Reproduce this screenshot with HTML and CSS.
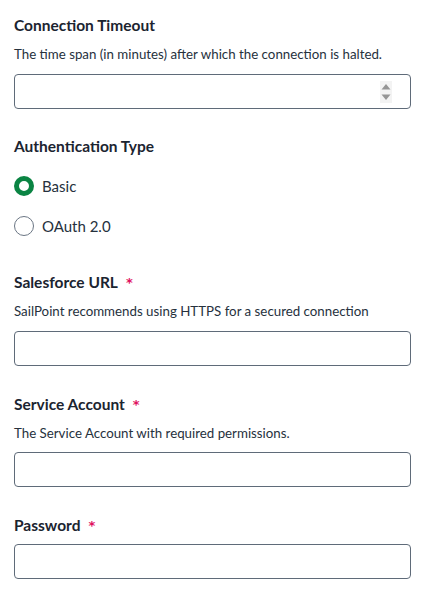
FILE: index.html
```html
<!DOCTYPE html>
<html lang="en">
<head>
<meta charset="utf-8">
<title>Connection settings</title>
<link rel="stylesheet" href="styles.css">
</head>
<body>
<form class="form">
  <div class="field">
    <div class="label">Connection Timeout</div>
    <div class="desc">The time span (in minutes) after which the connection is halted.</div>
    <div class="box">
      <input class="bare" type="text" aria-label="Connection Timeout">
      <svg class="spin" width="12" height="22" viewBox="0 0 12 22" aria-hidden="true">
        <rect x="0" y="0" width="12" height="22" fill="#f3f3f3"/>
        <path d="M1.5 8.5 L6 3 L10.5 8.5 Z" fill="#959595"/>
        <path d="M1.5 13.5 L10.5 13.5 L6 19 Z" fill="#959595"/>
      </svg>
    </div>
  </div>

  <div class="field radios">
    <div class="label">Authentication Type</div>
    <div class="radio-list">
      <label class="radio"><span class="dot on"></span><span>Basic</span></label>
      <label class="radio"><span class="dot"></span><span>OAuth 2.0</span></label>
    </div>
  </div>

  <div class="field">
    <div class="label">Salesforce URL <span class="req">*</span></div>
    <div class="desc">SailPoint recommends using HTTPS for a secured connection</div>
    <input class="input" type="text" aria-label="Salesforce URL">
  </div>

  <div class="field">
    <div class="label">Service Account <span class="req">*</span></div>
    <div class="desc tight">The Service Account with required permissions.</div>
    <input class="input" type="text" aria-label="Service Account">
  </div>

  <div class="field">
    <div class="label">Password <span class="req">*</span></div>
    <input class="input" type="password" aria-label="Password">
  </div>
</form>
</body>
</html>
```

FILE: styles.css
```css
* { box-sizing: border-box; }
html, body { margin: 0; padding: 0; background: #fff; }
body {
  font-family: Lato, "Liberation Sans", sans-serif;
  color: #1d2733;
}
.form {
  padding: 15px 15px 0 14px;
  display: flex;
  flex-direction: column;
  gap: 28px;
}
.field { display: flex; flex-direction: column; }
.label {
  font-size: 15.5px;
  font-weight: 700;
  line-height: 20px;
  color: #1b2430;
  margin-bottom: 9px;
  display: flex;
  align-items: center;
  gap: 8px;
}
.req {
  color: #e0115f;
  font-family: "DejaVu Sans", sans-serif;
  font-size: 13px;
  font-weight: 700;
  line-height: 20px;
  position: relative;
  top: 1px;
}
.desc {
  font-size: 13.3px;
  line-height: 20px;
  color: #26313d;
  margin-bottom: 10px;
}
.desc.tight { margin-bottom: 9px; }
.input, .box {
  width: 100%;
  height: 35px;
  border: 1px solid #5f6b79;
  border-radius: 4px;
  background: #fff;
  font: inherit;
}
.box {
  display: flex;
  align-items: center;
  padding-right: 18px;
}
.bare {
  flex: 1;
  min-width: 0;
  border: 0;
  outline: 0;
  height: 100%;
  background: transparent;
  font: inherit;
}
.spin { display: block; }
.radios { margin-top: -1px; }
.radio-list {
  display: flex;
  flex-direction: column;
  gap: 16px;
  margin-top: 9px;
  margin-bottom: 6px;
}
.radio {
  display: flex;
  align-items: center;
  gap: 8px;
  height: 24px;
  font-size: 15px;
  color: #26313d;
}
.dot {
  width: 20px;
  height: 20px;
  border-radius: 50%;
  border: 1px solid #6b7684;
  background: #fff;
}
.dot.on { border: 5px solid #0a8443; }
```
